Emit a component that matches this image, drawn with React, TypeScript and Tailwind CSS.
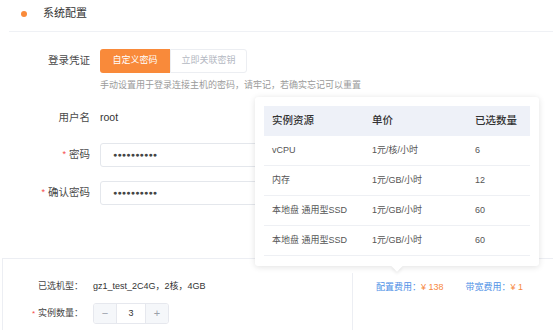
import React from "react";

const font = { fontFamily: '"Liberation Sans", "Noto Sans CJK SC", sans-serif' };

function Label({ text, required }: { text: string; required?: boolean }) {
  return (
    <div className="w-[90px] shrink-0 flex justify-end items-center text-[10.5px] text-[#4a4a4a]">
      {required && <span className="text-[#f5474a] text-[9px] mr-[3px]">*</span>}
      <span>{text}</span>
    </div>
  );
}

function PwdInput() {
  return (
    <div className="ml-[10px] w-[240px] h-[24px] border border-[#e4e7ec] rounded-[3px] bg-white flex items-center pl-[12px]">
      <span className="text-[7px] tracking-[0.2px] text-[#444]">●●●●●●●●●●</span>
    </div>
  );
}

const rows = [
  ["vCPU", "1元/核/小时", "6"],
  ["内存", "1元/GB/小时", "12"],
  ["本地盘 通用型SSD", "1元/GB/小时", "60"],
  ["本地盘 通用型SSD", "1元/GB/小时", "60"],
];

export default function App() {
  return (
    <div className="w-[553px] h-[330px] overflow-hidden relative bg-white" style={font}>
      {/* top section */}
      <div className="h-[258px] flex flex-col">
        <div className="ml-[9px] h-[32px] border-b border-[#eff1f5] flex items-center pl-[12px] pb-[4px]">
          <span className="w-[6px] h-[6px] rounded-full bg-[#f98a3a]"></span>
          <span className="ml-[16px] text-[11px] text-[#333]">系统配置</span>
        </div>
        <div className="flex items-center mt-[17px] h-[24px]">
          <Label text="登录凭证" />
          <div className="ml-[10px] flex h-[24px]">
            <div className="w-[70px] h-[24px] bg-[#f98a3a] rounded-l-[3px] flex items-center justify-center text-[9px] text-white">
              自定义密码
            </div>
            <div className="w-[77px] h-[24px] border border-[#eceef2] rounded-r-[3px] flex items-center justify-center text-[9px] text-[#b4b8c2]">
              立即关联密钥
            </div>
          </div>
        </div>
        <div className="ml-[100px] mt-[6px] text-[9px] leading-[12px] text-[#9a9a9a]">
          手动设置用于登录连接主机的密码，请牢记，若确实忘记可以重置
        </div>
        <div className="flex items-center mt-[19px] h-[16px]">
          <Label text="用户名" />
          <span className="ml-[10px] text-[10.5px] text-[#333]">root</span>
        </div>
        <div className="flex items-center mt-[17px]">
          <Label text="密码" required />
          <PwdInput />
        </div>
        <div className="flex items-center mt-[14px]">
          <Label text="确认密码" required />
          <PwdInput />
        </div>
      </div>

      {/* bottom section */}
      <div className="h-[72px] ml-[2px] border-t border-l border-[#eceef3] flex">
        <div className="w-[349px] flex flex-col pt-[21px]">
          <div className="flex items-center h-[14px] text-[9px]">
            <div className="w-[90px] flex justify-end text-[#444]">
              <span className="w-[55px]">已选机型：</span>
            </div>
            <span className="text-[#333]">gz1_test_2C4G，2核，4GB</span>
          </div>
          <div className="flex items-center mt-[9px] text-[9px]">
            <div className="w-[90px] flex justify-end items-center text-[#444]">
              <span className="text-[#f5474a] text-[8px] mr-[3px]">*</span>
              <span className="w-[55px]">实例数量：</span>
            </div>
            <div className="flex h-[21px] border border-[#e6e8ee] rounded-[3px] overflow-hidden">
              <div className="w-[22px] bg-[#f5f7fa] flex items-center justify-center text-[#9aa0aa] text-[11px]">−</div>
              <div className="w-[30px] bg-white border-l border-r border-[#e6e8ee] flex items-center justify-center text-[#333] text-[9px]">3</div>
              <div className="w-[22px] bg-[#f5f7fa] flex items-center justify-center text-[#9aa0aa] text-[11px]">+</div>
            </div>
          </div>
        </div>
        <div className="w-px bg-[#eceef3] mt-[14px]"></div>
        <div className="flex pt-[22px] pl-[23px] text-[9px] h-fit">
          <span className="text-[#4d8fe6]">配置费用：</span>
          <span className="text-[#f7893f]">¥ 138</span>
          <span className="ml-[22px] text-[#4d8fe6]">带宽费用：</span>
          <span className="text-[#f7893f]">¥ 1</span>
        </div>
      </div>

      {/* popover */}
      <div className="absolute left-[255px] top-[97px] w-[284px] h-[169px] bg-white rounded-[3px] shadow-[0_1px_6px_rgba(0,0,0,0.12)] px-[9px] pt-[9px]">
        <div className="flex h-[30px] bg-[#eef1f8] items-center text-[10.5px] text-[#333] font-medium">
          <div className="w-[108px] pl-[8px]">实例资源</div>
          <div className="w-[103px]">单价</div>
          <div className="flex-1">已选数量</div>
        </div>
        {rows.map((r, i) => (
          <div key={i} className="flex h-[30px] items-center border-b border-[#eef0f4] text-[9px] text-[#555]">
            <div className="w-[108px] pl-[8px]">{r[0]}</div>
            <div className="w-[103px]">{r[1]}</div>
            <div className="flex-1">{r[2]}</div>
          </div>
        ))}
        <div className="absolute left-[138px] bottom-[-4px] w-[8px] h-[8px] bg-white rotate-45 shadow-[2px_2px_3px_rgba(0,0,0,0.06)]"></div>
      </div>
    </div>
  );
}
